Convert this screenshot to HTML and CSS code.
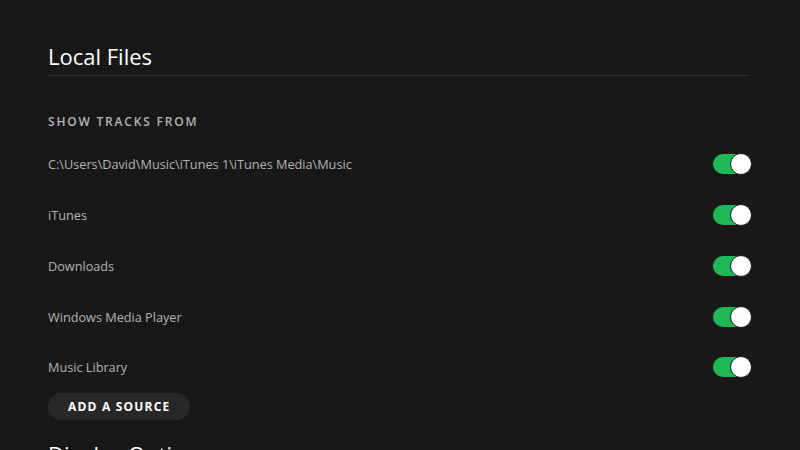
FILE: index.html
```html
<!DOCTYPE html>
<html>
<head>
<meta charset="utf-8">
<link rel="stylesheet" href="styles.css">
</head>
<body>
<main class="page">
  <h1 class="title">Local Files</h1>
  <h2 class="label">SHOW TRACKS FROM</h2>
  <div class="rows">
    <div class="row"><span class="name">C:\Users\David\Music\iTunes 1\iTunes Media\Music</span><span class="toggle"><span class="knob"></span></span></div>
    <div class="row"><span class="name">iTunes</span><span class="toggle"><span class="knob"></span></span></div>
    <div class="row"><span class="name">Downloads</span><span class="toggle"><span class="knob"></span></span></div>
    <div class="row"><span class="name">Windows Media Player</span><span class="toggle"><span class="knob"></span></span></div>
    <div class="row"><span class="name">Music Library</span><span class="toggle"><span class="knob"></span></span></div>
  </div>
  <button class="add">ADD A SOURCE</button>
  <h1 class="title next">Display Options</h1>
</main>
</body>
</html>
```
FILE: styles.css
```css
html, body {
  margin: 0;
  padding: 0;
  background: #181818;
  height: 100%;
  overflow: hidden;
}
.page {
  padding: 40px 0 0 48px;
  width: 703px;
  font-family: "Open Sans", "Liberation Sans", sans-serif;
  color: #b3b3b3;
}
.title {
  margin: 0;
  width: 700px;
  font-size: 22px;
  font-weight: 400;
  color: #ffffff;
  line-height: 32px;
  padding-bottom: 3px;
  border-bottom: 1px solid #333333;
}
.title.next {
  border-bottom: none;
  margin-top: 18px;
}
.label {
  margin: 36px 0 0 0;
  font-size: 12px;
  font-weight: 600;
  letter-spacing: 1.8px;
  line-height: 20px;
  color: #b3b3b3;
}
.rows {
  display: flex;
  flex-direction: column;
  margin-top: 7px;
}
.row {
  display: flex;
  align-items: center;
  justify-content: space-between;
  height: 50.75px;
  font-size: 12.7px;
}
.toggle {
  position: relative;
  width: 38px;
  height: 20px;
  border-radius: 10px;
  background: #1db954;
}
.knob {
  position: absolute;
  right: -1px;
  top: -1px;
  width: 22px;
  height: 22px;
  border-radius: 50%;
  background: #ffffff;
  box-sizing: border-box;
  border: 1px solid #1a1a1a;
}
.add {
  display: block;
  height: 27px;
  padding: 0 20px;
  width: 142px;
  white-space: nowrap;
  border: none;
  border-radius: 14px;
  background: #282828;
  color: #ffffff;
  font-family: "Open Sans", "Liberation Sans", sans-serif;
  font-size: 12px;
  font-weight: 700;
  letter-spacing: 1.2px;
}
```
